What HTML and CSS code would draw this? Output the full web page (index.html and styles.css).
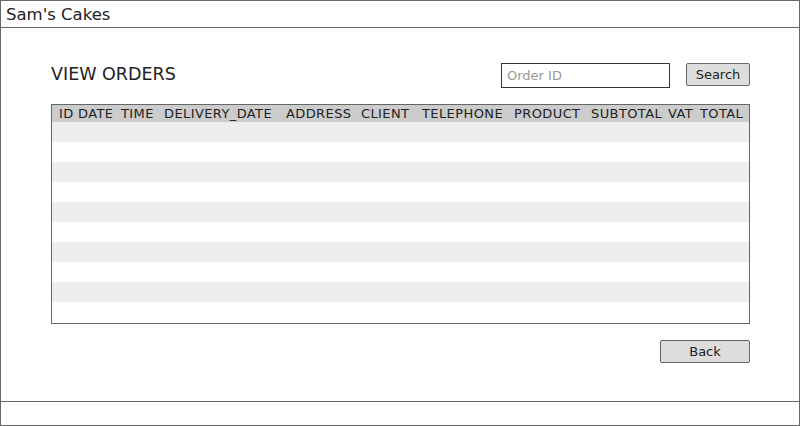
FILE: index.html
```html
<!DOCTYPE html>
<html>
<head>
<meta charset="utf-8">
<link rel="stylesheet" href="styles.css">
</head>
<body>
<div class="window">
  <div class="titlebar">Sam's Cakes</div>
  <div class="content">
    <div class="toprow">
      <h1 class="heading">VIEW ORDERS</h1>
      <div class="search">
        <input class="order-input" type="text" placeholder="Order ID">
        <button class="btn search-btn">Search</button>
      </div>
    </div>
    <div class="table">
      <div class="thead">
        <span class="c-id">ID</span><span class="c-date">DATE</span><span class="c-time">TIME</span><span class="c-ddate">DELIVERY_DATE</span><span class="c-addr">ADDRESS</span><span class="c-client">CLIENT</span><span class="c-tel">TELEPHONE</span><span class="c-prod">PRODUCT</span><span class="c-sub">SUBTOTAL</span><span class="c-vat">VAT</span><span class="c-total">TOTAL</span>
      </div>
      <div class="row alt"></div>
      <div class="row"></div>
      <div class="row alt"></div>
      <div class="row"></div>
      <div class="row alt"></div>
      <div class="row"></div>
      <div class="row alt"></div>
      <div class="row"></div>
      <div class="row alt"></div>
      <div class="row"></div>
    </div>
    <div class="bottomrow">
      <button class="btn back-btn">Back</button>
    </div>
  </div>
  <div class="footer"></div>
</div>
</body>
</html>
```
FILE: styles.css
```css
* { box-sizing: border-box; }
html, body { margin: 0; padding: 0; }
body {
  width: 800px;
  height: 426px;
  background: #fff;
  font-family: "DejaVu Sans", "Open Sans", sans-serif;
  color: #222;
}
.window {
  width: 800px;
  height: 426px;
  border: 1px solid #666;
  display: flex;
  flex-direction: column;
}
.titlebar {
  height: 27px;
  border-bottom: 1px solid #666;
  font-size: 16.5px;
  line-height: 28px;
  padding-left: 5px;
  color: #222;
}
.content {
  flex: 1;
  padding: 35px 49px 0 50px;
  display: flex;
  flex-direction: column;
}
.toprow {
  display: flex;
  justify-content: space-between;
  align-items: flex-start;
  height: 41px;
}
.heading {
  margin: 0;
  font-size: 17.5px;
  font-weight: normal;
  line-height: 20px;
  margin-top: 1px;
  color: #222;
}
.search {
  display: flex;
  gap: 16px;
}
.order-input {
  width: 169px;
  height: 25px;
  border: 1px solid #333;
  padding: 0 5px;
  font-family: inherit;
  font-size: 13px;
  color: #222;
  outline: none;
  background: #fff;
}
.order-input::placeholder { color: #999; }
.btn {
  background: #ddd;
  border: 1px solid #666;
  border-radius: 2px;
  font-family: inherit;
  font-size: 13px;
  color: #222;
  padding: 0;
  height: 23px;
  line-height: 21px;
}
.search-btn { width: 64px; }
.table {
  border: 1px solid #666;
  height: 220px;
  overflow: hidden;
}
.thead {
  height: 17px;
  background: #ccc;
  display: flex;
  padding: 0 0 0 7px;
  font-size: 13px;
  letter-spacing: 0.4px;
  line-height: 18px;
  color: #222;
  white-space: nowrap;
}
.c-id { width: 19px; }
.c-date { width: 43px; }
.c-time { width: 43px; }
.c-ddate { width: 122px; }
.c-addr { width: 75px; }
.c-client { width: 61px; }
.c-tel { width: 92px; }
.c-prod { width: 77px; }
.c-sub { width: 77px; }
.c-vat { width: 32px; }
.c-total { flex: 1; }
.row { height: 20px; background: #fff; }
.row.alt { background: #eee; }
.bottomrow {
  display: flex;
  justify-content: flex-end;
  padding-top: 16px;
}
.back-btn { width: 90px; }
.footer {
  height: 24px;
  border-top: 1px solid #666;
}
```
